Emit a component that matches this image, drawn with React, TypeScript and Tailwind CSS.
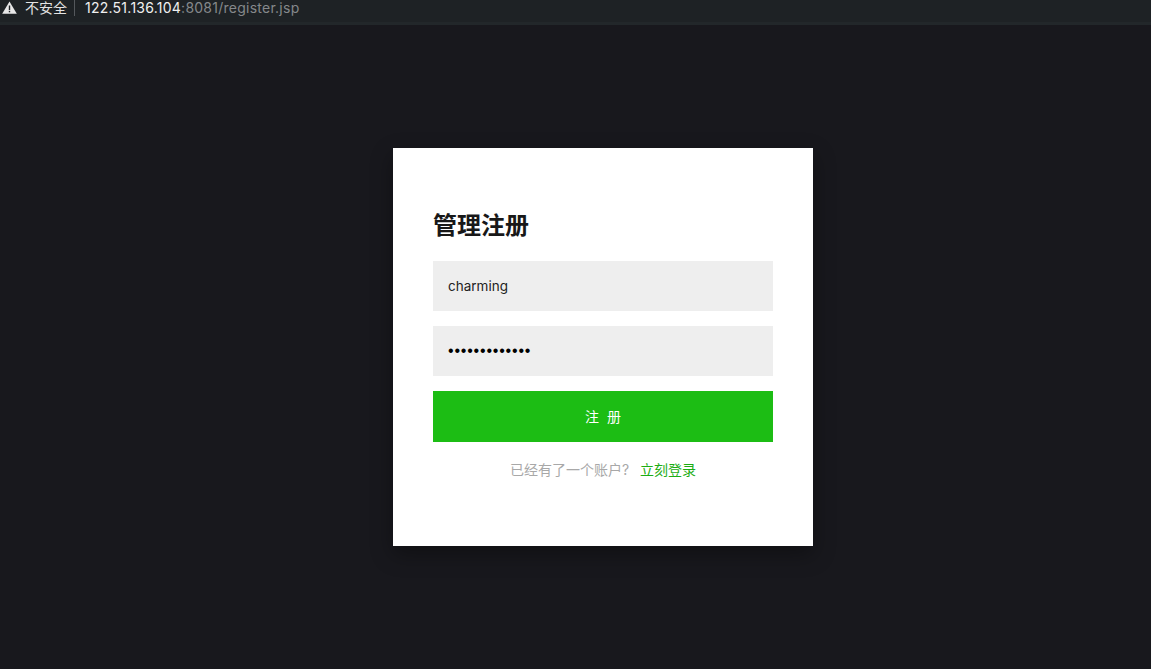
const FONT = "font-['Inter','Noto_Sans_CJK_SC',sans-serif]";

export default function App() {
  return (
    <div className={`h-[669px] w-[1151px] overflow-hidden bg-[#18181d] flex flex-col ${FONT}`}>
      {/* browser address bar */}
      <div className="h-[25px] shrink-0 bg-[#1e2225] border-b-[3px] border-[#22272a] flex items-center pl-[2px] pb-[7px] leading-[16px]">
        <svg width="15" height="13" viewBox="0 0 15 13" className="shrink-0">
          <path d="M7.5 0.5 L14.8 12.8 H0.2 Z" fill="#e8e8e8" />
          <rect x="6.8" y="4.5" width="1.4" height="4.5" fill="#1e2225" />
          <rect x="6.8" y="9.8" width="1.4" height="1.5" fill="#1e2225" />
        </svg>
        <span className="ml-[8px] text-[14px] text-[#e3e3e3]">不安全</span>
        <span className="ml-[7px] h-[16px] w-px bg-[#54585c]" />
        <span className="ml-[10px] text-[14px] tracking-[0.25px] text-[#f0f0f0]">122.51.136.104</span>
        <span className="text-[14px] tracking-[0.25px] text-[#85888b]">:8081/register.jsp</span>
      </div>

      <div className="flex justify-center pt-[123px] pl-[55px]">
        <div className="w-[420px] h-[398px] bg-white px-[40px] pt-[60px] shadow-[0_8px_20px_rgba(0,0,0,0.35)]">
          <h1 className="text-[24px] leading-[32px] font-semibold text-[#181818] mb-[19px] mt-[2px]">管理注册</h1>
          <div className="h-[50px] bg-[#eeeeee] flex items-center pl-[15px] pt-[1px] text-[13.5px] text-[#222] mb-[15px]">
            charming
          </div>
          <div className="h-[50px] bg-[#eeeeee] flex items-center px-[15px] mb-[15px]">
            <span className="text-[16px] tracking-[0.8px] text-black font-['Liberation_Sans',sans-serif]">•••••••••••••</span>
          </div>
          <button className="block w-full h-[51px] bg-[#1cbd14] text-white text-[14px] tracking-[8px] pl-[8px]">注册</button>
          <p className="mt-[18px] text-center text-[14px] leading-[20px] text-[#a8a8a8]">
            已经有了一个账户?<span className="ml-[11px] text-[#1cad14]">立刻登录</span>
          </p>
        </div>
      </div>
    </div>
  );
}
